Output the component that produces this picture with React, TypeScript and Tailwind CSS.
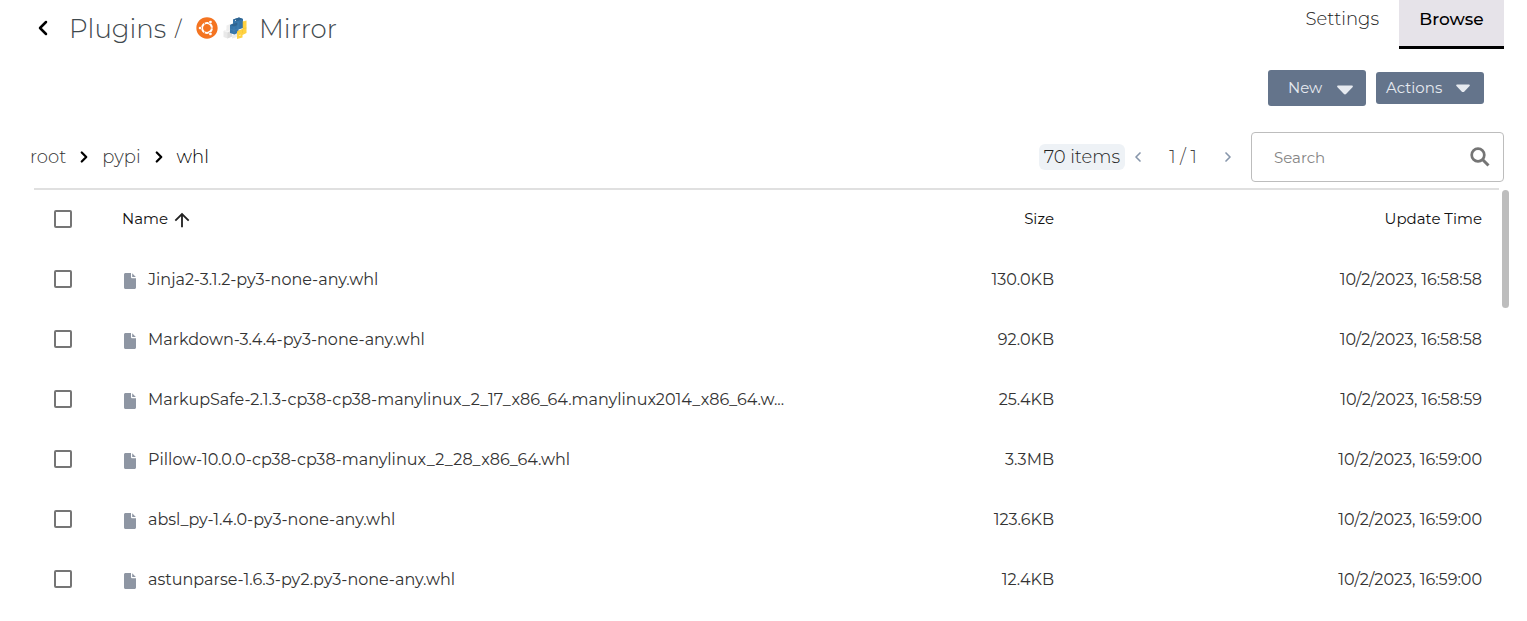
import React from "react";
import { FaUbuntu } from "react-icons/fa";
import { ChevronLeft, ChevronRight } from "lucide-react";
import { MdArrowUpward } from "react-icons/md";

type FileRow = { name: string; size: string; updated: string };

const files: FileRow[] = [
  { name: "Jinja2-3.1.2-py3-none-any.whl", size: "130.0KB", updated: "10/2/2023, 16:58:58" },
  { name: "Markdown-3.4.4-py3-none-any.whl", size: "92.0KB", updated: "10/2/2023, 16:58:58" },
  {
    name: "MarkupSafe-2.1.3-cp38-cp38-manylinux_2_17_x86_64.manylinux2014_x86_64.w...",
    size: "25.4KB",
    updated: "10/2/2023, 16:58:59",
  },
  { name: "Pillow-10.0.0-cp38-cp38-manylinux_2_28_x86_64.whl", size: "3.3MB", updated: "10/2/2023, 16:59:00" },
  { name: "absl_py-1.4.0-py3-none-any.whl", size: "123.6KB", updated: "10/2/2023, 16:59:00" },
  { name: "astunparse-1.6.3-py2.py3-none-any.whl", size: "12.4KB", updated: "10/2/2023, 16:59:00" },
];

function Caret({ className }: { className: string }) {
  return (
    <svg viewBox="0 0 16 10" className={className} fill="currentColor" aria-hidden="true">
      <path d="M1.3 0.5h13.4c1.1 0 1.5 1 .8 1.7L9.3 8.8c-.8.8-1.8.8-2.6 0L.5 2.2C-.2 1.5.2.5 1.3.5z" />
    </svg>
  );
}

function FileIcon() {
  return (
    <svg viewBox="0 0 12 16" className="mt-[2px] ml-[2px] h-4 w-3 shrink-0 text-[#8e96a3]" fill="currentColor" aria-hidden="true">
      <path d="M1.500 0H7v4c0 .8.500 1.300 1.300 1.300H12v9.200c0 .8-.7 1.500-1.500 1.500h-9C.7 16 0 15.300 0 14.500v-13C0 .7.7 0 1.500 0z" />
      <path d="M8.200.200L11.800 4H8.200z" />
    </svg>
  );
}

function SearchIcon() {
  return (
    <svg viewBox="0 0 20 20" className="size-5" fill="none" stroke="currentColor" aria-hidden="true">
      <circle cx="8" cy="8" r="6.300" strokeWidth="2.700" />
      <path d="M12.500 12.500l6 6" strokeWidth="3" />
    </svg>
  );
}

function PypiLogo() {
  return (
    <svg viewBox="0 0 48 44" className="h-[22px] w-6" aria-hidden="true">
      <path d="M1 28l9-4 8 3v12l-9 4-8-3z" fill="#e9e9e9" />
      <path d="M1 28l9-4 8 3-9 4z" fill="#f7f7f7" />
      <path d="M9 31l9-4v12l-9 4z" fill="#dcdcdc" />
      <path d="M7 17l8-3v12l-8 3z" fill="#eeeeee" />
      <path d="M18 36l10-3v7l-10 3z" fill="#ececec" />
      <path d="M20 5l12-4 8 3v18l-9 3v6l-8 4-9-3V16l6-3z" fill="#3775a9" />
      <path d="M20 5l12-4 8 3-11 4z" fill="#2f6491" />
      <path d="M14 16l15-5v5l-7 3z" fill="#2f6491" />
      <path d="M22 19v14M30 9v14M14 24l8 3 9-4" stroke="#4b88bb" strokeWidth="1" fill="none" />
      <path d="M24 6.500l2 .7" stroke="#fff" strokeWidth="1.600" />
      <path d="M40 9l7-2v25l-8 4v5l-11 3V29l12-5z" fill="#ffd242" />
      <path d="M28 29l12-5 7-2M40 8v16M39 32v-7" stroke="#f2be2c" strokeWidth="1" fill="none" />
      <path d="M33 37l2-.7" stroke="#fff" strokeWidth="1.800" />
    </svg>
  );
}

function Checkbox({ label }: { label: string }) {
  return (
    <input
      type="checkbox"
      aria-label={label}
      className="block size-[18px] appearance-none rounded-xs border-2 border-[#757575] bg-white checked:bg-[#757575]"
    />
  );
}

export default function App() {
  return (
    <div className="bg-white pr-[18px] pl-[30px] font-['Montserrat','Inter',sans-serif] text-[#333]">
      <header className="flex items-start justify-between pr-[5px]">
        <div className="flex h-14 items-center text-[26px] font-light text-[#3f494e]">
          <button type="button" aria-label="Back" className="flex w-[39px] pl-[1px] text-black">
            <ChevronLeft className="size-6" strokeWidth={2.500} />
          </button>
          <a href="#plugins" className="w-[106px] pt-[2px]">Plugins</a>
          <span className="w-[21px] pt-[2px] text-xl text-[#333]">/</span>
          <h1 className="flex items-center">
            <FaUbuntu className="size-[22px] text-[#f47421]" aria-hidden="true" />
            <span className="mr-3 ml-[5px]">
              <PypiLogo />
            </span>
            <span className="pt-[2px]">Mirror</span>
          </h1>
        </div>
        <nav className="flex">
          <a href="#settings" className="px-5 pt-[7px] text-lg leading-6 font-light text-[#222]">Settings</a>
          <a
            href="#browse"
            aria-current="page"
            className="h-[49px] w-[105px] border-b-3 border-black bg-[#e6e3e9] pt-[7px] text-center text-[17px] leading-6 font-medium text-black"
          >
            Browse
          </a>
        </nav>
      </header>

      <div className="mt-[14px] flex items-center justify-end gap-[10px] pr-[25px] text-[15px] text-[#e6eaf0]">
        <button type="button" className="flex h-9 w-[98px] items-center justify-between rounded-[3px] bg-[#64748b] pr-[13px] pl-5">
          New
          <Caret className="mt-[3px] w-4" />
        </button>
        <button type="button" className="flex h-8 w-[108px] items-center justify-between rounded-[3px] bg-[#64748b] pr-[14px] pl-[10px]">
          Actions
          <Caret className="w-[14px]" />
        </button>
      </div>

      <div className="mt-[26px] flex items-center justify-between pr-[5px] text-lg font-light">
        <nav aria-label="Path" className="flex items-center">
          <a href="#root" className="text-[#333]">root</a>
          <ChevronRight className="mx-[9px] size-[18px] text-black" strokeWidth={3} />
          <a href="#pypi" className="text-[#333]">pypi</a>
          <ChevronRight className="mx-[9px] size-[18px] text-black" strokeWidth={3} />
          <span className="text-black">whl</span>
        </nav>
        <div className="flex items-center">
          <span className="rounded-md bg-[#eef2f6] px-[5px] leading-[26px] text-[#222]">70 items</span>
          <button type="button" aria-label="Previous page" className="ml-[5px] text-[#8796ab]">
            <ChevronLeft className="size-4" strokeWidth={2.500} />
          </button>
          <span className="w-[74px] text-center text-[#444]">1 / 1</span>
          <button type="button" aria-label="Next page" className="mr-[15px] text-[#8796ab]">
            <ChevronRight className="size-4" strokeWidth={2.500} />
          </button>
          <label className="flex h-[50px] w-[253px] items-center rounded border border-[#bdbdbd] pr-[13px] pl-[22px] text-[#757575]">
            <input
              type="text"
              aria-label="Search"
              placeholder="Search"
              className="min-w-0 flex-1 pt-[2px] text-[15px] font-normal outline-none placeholder:text-[#858585]"
            />
            <SearchIcon />
          </label>
        </div>
      </div>

      <div className="mt-[6px] flex">
        <div className="min-w-0 flex-1 pl-1">
          <div className="border-t-2 border-[#e0e0e0]">
            <table className="w-full table-fixed text-base">
              <thead>
                <tr className="h-[59px] text-[15px] text-[#111]">
                  <th className="w-[88px] pb-[2px] pl-5"><Checkbox label="Select all" /></th>
                  <th aria-sort="ascending" className="text-left font-normal">
                    <button type="button" className="flex items-center gap-[3px]">
                      Name <MdArrowUpward className="size-[22px] text-[#222]" />
                    </button>
                  </th>
                  <th className="w-[200px] text-right font-normal">Size</th>
                  <th className="w-[445px] pr-[17px] text-right font-normal">Update Time</th>
                </tr>
              </thead>
              <tbody>
                {files.map((file) => (
                  <tr key={file.name} className="h-[60px]">
                    <td className="pl-5"><Checkbox label={"Select " + file.name} /></td>
                    <td className="pt-[2px]">
                      <span className="flex items-center gap-3 whitespace-nowrap">
                        <FileIcon />
                        {file.name}
                      </span>
                    </td>
                    <td className="pt-[2px] text-right">{file.size}</td>
                    <td className="pt-[2px] pr-[17px] text-right">{file.updated}</td>
                  </tr>
                ))}
              </tbody>
            </table>
          </div>
        </div>
        <div className="ml-[3px] w-[7px] pt-[2px]">
          <div className="h-[118px] rounded-full bg-[#bdbdbd]" />
        </div>
      </div>
    </div>
  );
}
